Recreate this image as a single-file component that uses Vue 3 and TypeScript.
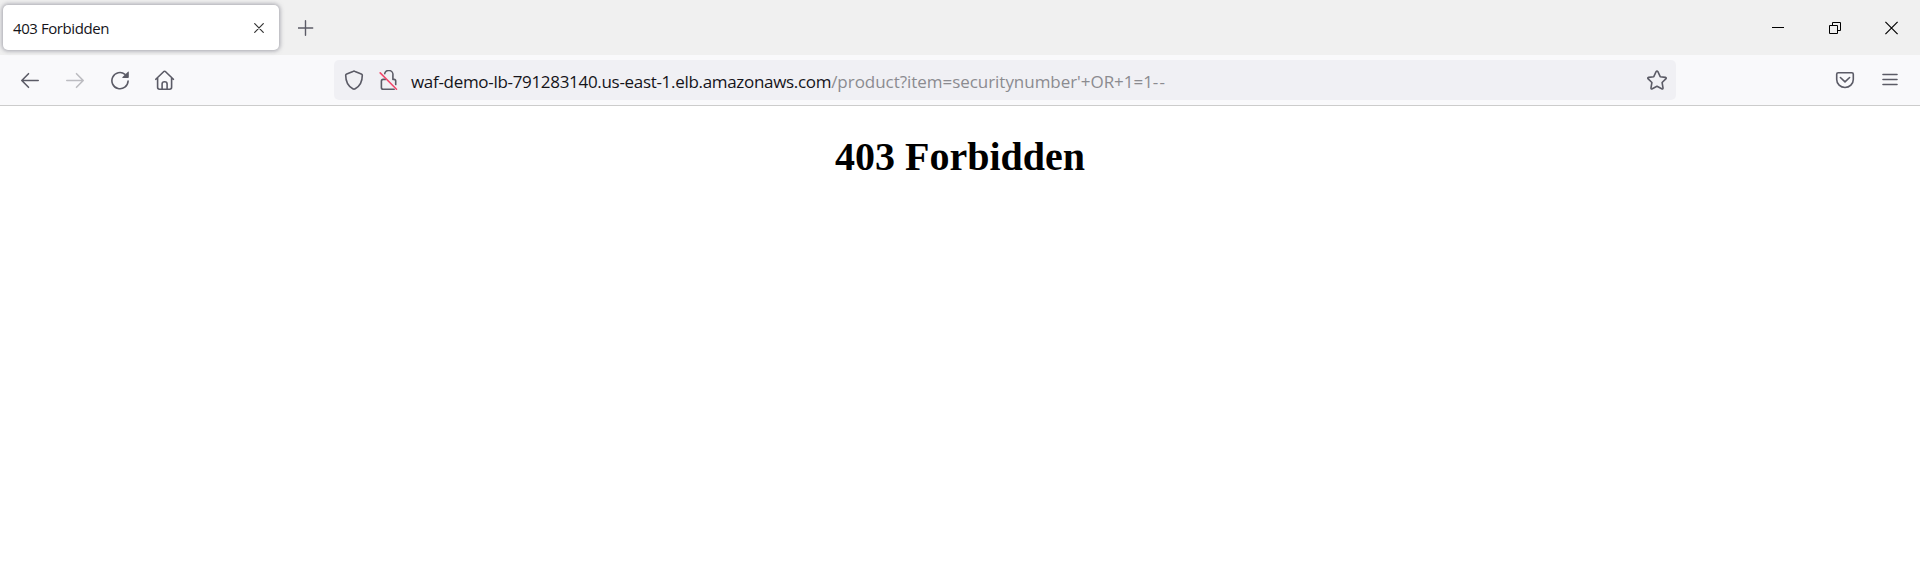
<script setup lang="ts">
const title = '403 Forbidden'
const host = 'waf-demo-lb-791283140.us-east-1.elb.amazonaws.com'
const path = "/product?item=securitynumber'+OR+1=1"
</script>

<template>
  <div class="browser">
    <header class="tabs">
      <div class="tab">
        <span class="tab-title">{{ title }}</span>
        <svg class="tab-close" viewBox="0 0 10 10"><path d="M.7.7l8.6 8.6M9.3.7L.7 9.3" /></svg>
      </div>
      <svg class="plus" viewBox="0 0 16 16"><path d="M7.500 .8v14.400M.3 8h14.400" /></svg>
      <div class="window-controls">
        <svg viewBox="0 0 14 14"><path d="M1 6.500h12" /></svg>
        <svg viewBox="0 0 14 14"><path d="M1.500 4.500h8v8h-8zM4.500 4.500v-3h8v8h-3" /></svg>
        <svg class="window-close" viewBox="0 0 14 14"><path d="M.4.900l12.200 12.200M12.600.900L.4 13.100" /></svg>
      </div>
    </header>
    <nav class="toolbar">
      <div class="buttons">
        <svg viewBox="0 0 20 20"><path d="M18.200 10.500H2M8.500 3.700L1.800 10.500l6.700 6.800" /></svg>
        <svg class="disabled" viewBox="0 0 20 20"><path d="M1.800 10.500H18M11.500 3.700l6.700 6.800-6.700 6.800" /></svg>
        <svg viewBox="0 0 20 20">
          <path d="M18.100 11A8.100 8.100 0 1 1 15 4.300" />
          <path class="solid" d="M18 1.800c.5-.5.8-.3.8.3v5.100c0 .5-.3.8-.8.8h-5c-.7 0-.9-.5-.4-1z" />
        </svg>
        <svg viewBox="0 0 20 20">
          <path d="M.8 9.300L8.600 1.700q1-.9 2 0l7.800 7.600M2.600 7.800v9.500q0 1.900 1.900 1.900h10.200q1.900 0 1.900-1.900V7.800M7.100 19v-5q0-2.200 2.500-2.200t2.500 2.200v5" />
        </svg>
      </div>
      <div class="address">
        <svg viewBox="0 0 20 20">
          <path d="M10 1.100q.5 0 1 .3l6.300 2.500q1 .4 1 1.400c0 6.100-2.500 11-7.100 13.500q-1.200.7-2.400 0C4.200 16.300 1.700 11.400 1.700 5.300q0-1 1-1.400L9 1.400q.5-.3 1-.3z" />
        </svg>
        <svg class="lock" viewBox="0 0 20 20">
          <path d="M5.600 4A4.200 4.200 0 0 1 13.900 5.300V9.400H15q1.700 0 1.700 1.700v3.600M6.500 9.400H4.200q-1.800 0-1.800 1.800v6.200q0 1.800 1.800 1.800h11" />
          <path class="halo" d="M2 2.600l16 16" />
          <path class="slash" d="M1.200 2.900l16.300 16.300" />
        </svg>
        <div class="url"><span class="host">{{ host }}</span><span class="path">{{ path }}<span class="dashes">--</span></span></div>
        <svg class="star" viewBox="0 0 20 20">
          <path d="M9.100 1.700q.9-1.500 1.800 0l2.300 5 5.200.7q1.500.3.400 1.500l-3.700 3.600.9 5.400q.1 1.600-1.300.9L10 16.300l-4.700 2.500q-1.400.7-1.300-.9l.9-5.400-3.700-3.600Q.1 7.700 1.600 7.400l5.200-.7z" />
        </svg>
      </div>
      <svg class="pocket" viewBox="0 0 20 20">
        <path d="M3.200 2.700h13.600q1.500 0 1.500 1.500v5.300a8.300 8 0 0 1-16.600 0V4.200q0-1.500 1.500-1.500zM5.400 7.500L10 11.900l4.600-4.400" />
      </svg>
      <svg class="menu" viewBox="0 0 20 20"><path d="M3 4.500h14M3 9.500h14M3 14.500h14" /></svg>
    </nav>
    <main><h1>{{ title }}</h1></main>
  </div>
</template>

<style scoped>
.browser {
  height: 576px;
  overflow: hidden;
  background: #fff;
  font-family: "Open Sans", "Noto Sans", sans-serif;
}
svg {
  display: block;
  flex: none;
  width: 20px;
  height: 20px;
  fill: none;
  stroke: #5b5b66;
  stroke-width: 1.6;
  stroke-linecap: round;
  stroke-linejoin: round;
}
.tabs {
  display: flex;
  align-items: center;
  box-sizing: border-box;
  height: 55px;
  padding: 0 21px 0 3px;
  background: #f0f0f0;
}
.tab {
  display: flex;
  align-items: center;
  justify-content: space-between;
  box-sizing: border-box;
  width: 276px;
  height: 45px;
  padding: 0 15px 0 10px;
  border-radius: 5px;
  background: #fff;
  box-shadow: 0 0 4px 1px rgba(100, 100, 115, 0.55);
}
.tab-title {
  font-size: 15px;
  line-height: 20px;
  letter-spacing: -0.42px;
  white-space: nowrap;
  color: #15141a;
}
.tab-close {
  width: 10px;
  height: 10px;
  stroke: #333;
  stroke-width: 1.2;
}
.plus {
  width: 16px;
  height: 16px;
  margin-left: 19px;
  stroke-width: 1.4;
}
.window-controls {
  display: flex;
  gap: 43px;
  margin-left: auto;
}
.window-controls svg {
  width: 14px;
  height: 14px;
  stroke: #000;
  stroke-width: 1;
  stroke-linecap: butt;
  stroke-linejoin: miter;
}
.window-controls .window-close {
  stroke-width: 1.2;
}
.toolbar {
  display: flex;
  align-items: center;
  box-sizing: border-box;
  height: 51px;
  padding: 0 20px;
  border-bottom: 1px solid #ccc;
  background: #f9f9fb;
}
.buttons {
  display: flex;
  gap: 25px;
}
.disabled {
  stroke: #bcbcc1;
}
.solid {
  fill: #5b5b66;
  stroke: none;
}
.address {
  display: flex;
  align-items: center;
  box-sizing: border-box;
  width: 1342px;
  height: 40px;
  margin-left: 159px;
  padding: 0 9px 0 10px;
  border-radius: 5px;
  background: #f0f0f4;
}
.lock {
  margin-left: 15px;
}
.halo {
  stroke: #f0f0f4;
  stroke-width: 2.2;
}
.slash {
  stroke: #f2486c;
  stroke-width: 1.6;
}
.url {
  margin: 3px 0 0 12px;
  font-size: 17px;
  line-height: 24px;
  white-space: nowrap;
}
.host {
  letter-spacing: -0.31px;
  color: #15141a;
}
.path {
  letter-spacing: -0.04px;
  color: #8b8b90;
}
.dashes {
  letter-spacing: 1.2px;
}
.star {
  margin-left: auto;
}
.pocket {
  margin-left: 159px;
}
.menu {
  margin-left: 25px;
}
h1 {
  margin: 28px 0 0;
  font: bold 40px/46px "Liberation Serif", serif;
  text-align: center;
  color: #000;
}
</style>
